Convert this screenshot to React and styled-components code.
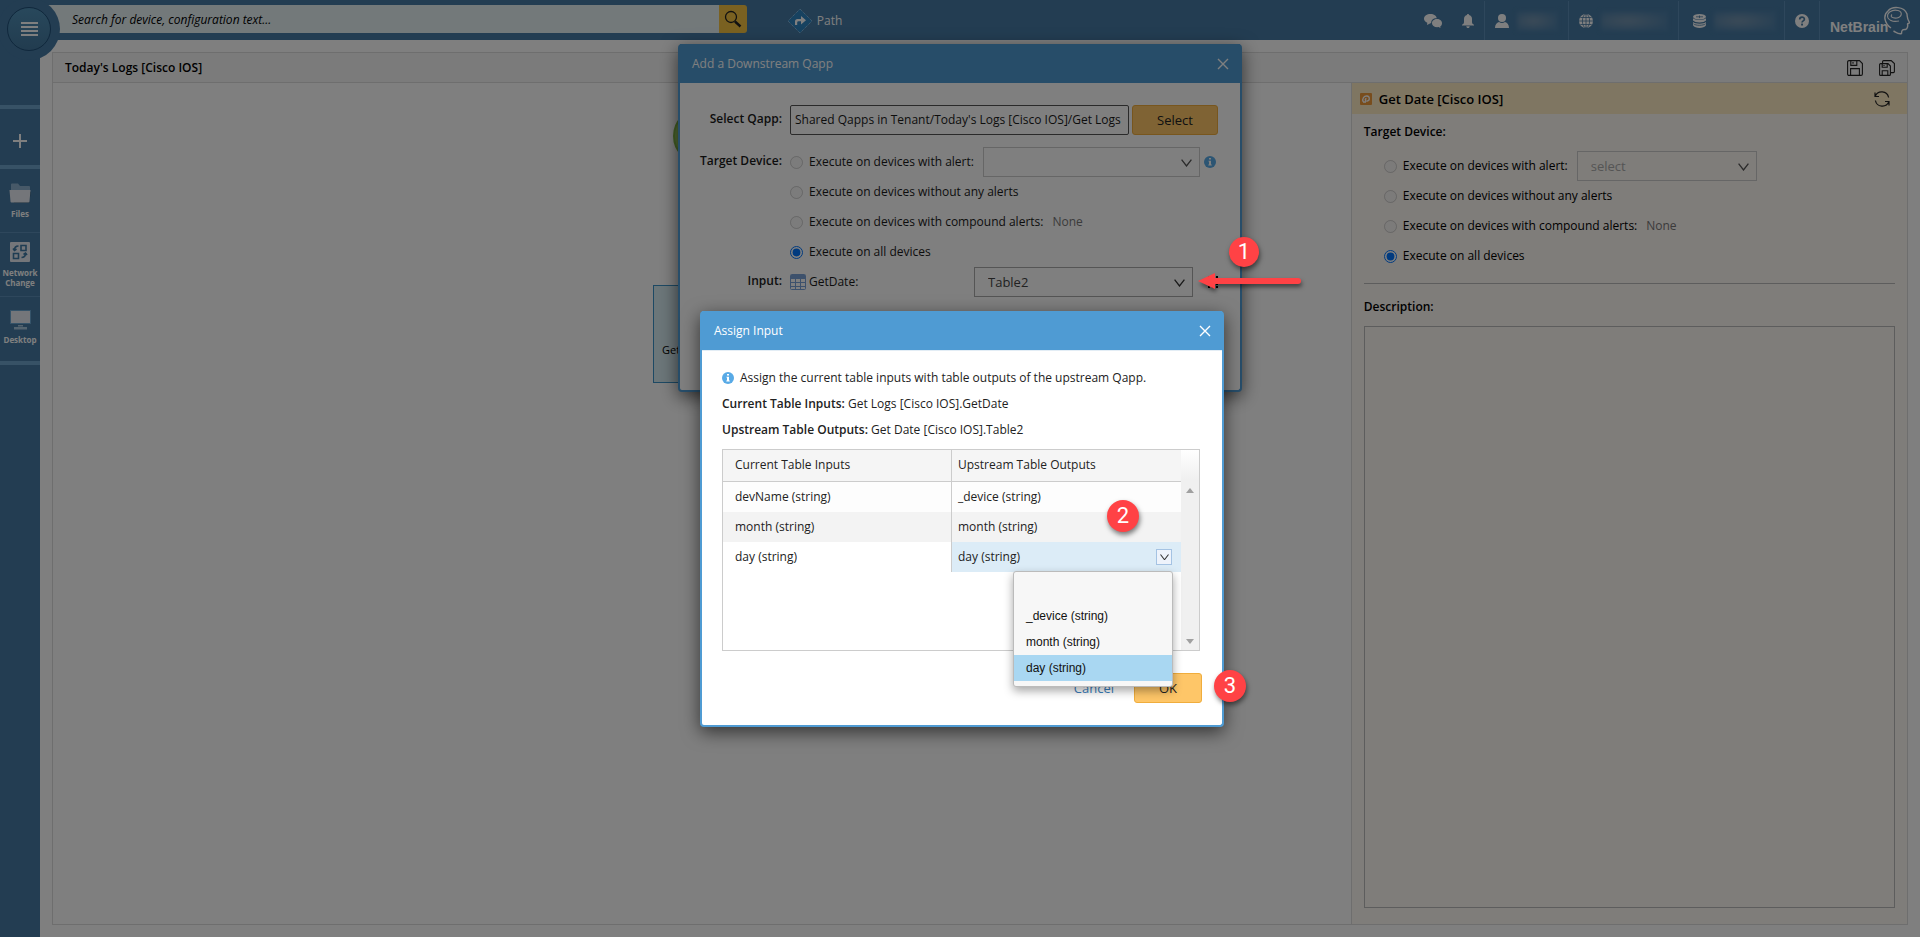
import React, { useState } from 'react';
import styled, { createGlobalStyle, css } from 'styled-components';

const blue = '#4f9bd3';
const navy = '#467aa4';

const GlobalStyle = createGlobalStyle`
  *, *::before, *::after { box-sizing: border-box; }
  body { margin: 0; background: #fff; color: #000; font: 12px/16px "Open Sans", sans-serif; overflow: hidden; }
  button, input, select, textarea { font: inherit; color: inherit; margin: 0; }
  button { padding: 0; border: 0; background: none; cursor: pointer; }
  svg { display: block; flex: none; }
  p, h1, h2, ul { margin: 0; padding: 0; font-size: inherit; }
`;

const Page = styled.div`
  min-height: 100vh;
  display: flex;
  flex-direction: column;
  position: relative;
`;

const TopBar = styled.header`
  height: 40px;
  flex: none;
  background: ${navy};
  color: #fff;
  display: flex;
  align-items: center;
  padding: 1px 10px 0 40px;
`;

const SearchForm = styled.form`
  display: flex;
  width: 37.8%;
  height: 28px;
  margin-bottom: 3px;
`;

const SearchInput = styled.input`
  flex: 1;
  min-width: 0;
  border: 0;
  padding: 2px 0 0 32px;
  background: #e6f2f5;
  font-size: 12px;
  font-style: italic;
  &::placeholder { color: #000; opacity: 1; }
`;

const SearchButton = styled.button`
  width: 28px;
  background: #f5c342;
  border-radius: 0 3px 3px 0;
  color: #222;
  display: grid;
  place-items: center;
`;

const PathLink = styled.a`
  display: flex;
  align-items: center;
  gap: 4px;
  margin-left: 40px;
  color: #fff;
  text-decoration: none;
`;

const TopTools = styled.div`
  margin-left: auto;
  display: flex;
  height: 100%;
`;

const Tool = styled.button`
  height: 100%;
  display: flex;
  align-items: center;
  gap: 8px;
  color: #fff;
  padding: ${(p) => p.$pad || '0 10px'};
  border-left: ${(p) => (p.$divided ? '1px solid #5c8fb8' : '0')};
`;

const Redacted = styled.span`
  width: ${(p) => p.$width}px;
  height: 20px;
  background: radial-gradient(ellipse at 40% 50%, #7896b0, #4f80a8 75%);
  filter: blur(2px);
`;

const Logo = styled.span`
  display: flex;
  align-items: center;
  padding-left: 10px;
  border-left: 1px solid #5c8fb8;
`;

const MenuButton = styled.button`
  position: absolute;
  top: -2px;
  left: -2px;
  width: 62px;
  height: 62px;
  border-radius: 50%;
  background: ${navy};
  display: grid;
  place-items: center;
`;

const MenuDisc = styled.span`
  width: 44px;
  height: 44px;
  border-radius: 50%;
  border: 1px solid #1f4f78;
  background: linear-gradient(#5191b8, #44789f);
  display: flex;
  flex-direction: column;
  align-items: center;
  justify-content: center;
  gap: 2px;
  i { width: 17px; height: 2px; background: #fff; }
`;

const Columns = styled.div`
  flex: 1;
  display: flex;
`;

const SideBar = styled.nav`
  width: 40px;
  flex: none;
  background: ${navy};
  padding-top: 65px;
  display: flex;
  flex-direction: column;
`;

const SideItem = styled.button`
  color: #fff;
  font-size: 8px;
  line-height: 10px;
  font-weight: 700;
  display: flex;
  flex-direction: column;
  align-items: center;
  justify-content: center;
  gap: ${(p) => (p.$last ? 5 : 6)}px;
  padding: ${(p) => p.$pad || 0};
  border-top: ${(p) => (p.$thick ? '4px' : '1px')} solid ${(p) => (p.$thick ? '#6ea5cd' : '#5c8fb8')};
  border-bottom: ${(p) => (p.$last ? '4px solid #6ea5cd' : '0')};
  height: ${(p) => p.$height}px;
`;

const Workspace = styled.main`
  flex: 1;
  margin: 12px;
  border: 1px solid #ddd;
  display: flex;
  flex-direction: column;
`;

const WorkspaceHead = styled.div`
  height: 30px;
  border-bottom: 1px solid #ddd;
  background: #f7f7f7;
  padding: 0 12px;
  display: flex;
  align-items: center;
  gap: 16px;
  h1 { font-weight: 600; flex: 1; }
`;

const WorkspaceBody = styled.div`
  flex: 1;
  display: flex;
`;

const Canvas = styled.div`
  flex: 1;
  position: relative;
`;

const StartNode = styled.div`
  position: absolute;
  left: 620px;
  top: 25px;
  width: 56px;
  height: 56px;
  border-radius: 50%;
  background: #a0d468;
  border: 2px solid #86bd4a;
`;

const QappNode = styled.div`
  position: absolute;
  left: 600px;
  top: 202px;
  width: 120px;
  height: 98px;
  background: #d8edf3;
  border: 1px solid #3b93c8;
  padding: 56px 8px 0;
  font-size: 11px;
`;

const DetailPanel = styled.aside`
  width: 30%;
  flex: none;
  border-left: 1px solid #ddd;
  background: #fffaf5;
  display: flex;
  flex-direction: column;
`;

const DetailHead = styled.div`
  height: 31px;
  background: #ffecc4;
  padding: 0 17px 0 8px;
  display: flex;
  align-items: center;
  gap: 7px;
  h2 { font-size: 13px; font-weight: 600; flex: 1; }
`;

const DetailBody = styled.div`
  flex: 1;
  display: flex;
  flex-direction: column;
  padding: 10px 12px 16px 12px;
  hr { width: 100%; border: 0; border-top: 1px solid #bbb; margin: 12px 0 15px; }
`;

const Heading = styled.span`
  font-weight: 600;
  line-height: 16px;
`;

const RadioList = styled.div`
  display: flex;
  flex-direction: column;
  padding-left: ${(p) => p.$indent || 0}px;
  margin-top: ${(p) => p.$top || 0}px;
`;

const RadioRow = styled.div`
  height: 30px;
  display: flex;
  align-items: center;
  white-space: nowrap;
  label { display: flex; align-items: center; gap: 6px; }
  input { width: 13px; height: 13px; }
`;

const Muted = styled.span`
  color: #777;
  margin-left: 9px;
`;

const SelectBox = styled.span`
  position: relative;
  display: block;
  height: 30px;
  width: ${(p) => p.$width}px;
  margin-left: ${(p) => p.$gap || 0}px;
  color: ${(p) => (p.$faint ? '#555' : '#333')};
  svg { position: absolute; right: 8px; top: 12px; pointer-events: none; }
  select {
    appearance: none;
    width: 100%;
    height: 100%;
    padding: 0 26px 0 13px;
    border: 1px solid ${(p) => (p.$faint ? '#ccc' : '#aaa')};
    border-radius: 0;
    background: transparent;
    color: ${(p) => (p.$faint ? '#aaa' : '#444')};
    font-size: 13px;
    opacity: 1;
  }
`;

const Description = styled.textarea`
  flex: 1;
  width: 100%;
  resize: none;
  margin-top: 11px;
  border: 1px solid #bbb;
  background: transparent;
`;

const Layer = styled.div`
  position: absolute;
  inset: 0;
  display: flex;
  justify-content: center;
  align-items: flex-start;
  padding: ${(p) => p.$padding};
  background: ${(p) => (p.$dim ? 'rgba(0, 0, 0, 0.5)' : 'transparent')};
`;

const Dialog = styled.section`
  position: relative;
  width: ${(p) => p.$width}px;
  min-height: ${(p) => p.$height}px;
  border: 2px solid ${blue};
  border-top: 0;
  border-radius: 4px;
  background: #fff;
  box-shadow: 0 5px 18px rgba(0, 0, 0, 0.6);
`;

const DialogHead = styled.div`
  height: 39px;
  padding: 1px 11px 0 12px;
  background: ${blue};
  color: #fff;
  display: flex;
  align-items: center;
  justify-content: space-between;
  h2 { font-weight: 500; font-size: 12px; }
`;

const Form = styled.div`
  display: grid;
  grid-template-columns: 102px 1fr;
  column-gap: 8px;
  padding: 22px 22px 0 0;
  color: #1a1a1a;
`;

const FormLabel = styled.label`
  font-weight: 600;
  line-height: 28px;
  text-align: right;
`;

const PickRow = styled.div`
  display: flex;
  gap: 3px;
  height: 30px;
  margin-bottom: 12px;
  input { flex: 1; min-width: 0; border: 1px solid #555; padding: 0 4px; background: #fff; border-radius: 2px; }
`;

const amber = css`
  background: #fec668;
  border: 1px solid #f0ad3c;
  border-radius: 3px;
  color: #222;
  height: 30px;
`;

const AmberButton = styled.button`
  ${amber}
  width: ${(p) => p.$width}px;
  font-size: 13px;
`;

const InputRow = styled.div`
  height: 30px;
  display: flex;
  align-items: center;
  gap: 3px;
  & > label { flex: 1; }
`;

const MoreButton = styled.button`
  width: 10px;
  height: 12px;
  margin-left: 12px;
  border: 2px dotted #000;
`;

const AssignBody = styled.div`
  border-top: 1px solid #e3edf5;
  padding: 19px 22px 22px 20px;
  color: #222;
`;

const Hint = styled.p`
  display: flex;
  align-items: center;
  gap: 6px;
  margin-bottom: 10px;
`;

const Line = styled.p`
  margin-bottom: 10px;
  b { font-weight: 600; }
`;

const GridFrame = styled.div`
  height: 202px;
  margin-top: 11px;
  border: 1px solid #ccc;
  display: flex;
  align-items: stretch;
`;

const TableArea = styled.div`
  flex: 1;
`;

const InputsTable = styled.table`
  width: 100%;
  border-collapse: separate;
  border-spacing: 0;
  table-layout: fixed;
  th, td { height: 30px; padding: 0 6px; text-align: left; font-weight: 400; }
  th { height: 32px; padding-bottom: 2px; background: #f5f5f5; border-bottom: 1px solid #ccc; }
  th:first-child, td:first-child { padding-left: 12px; border-right: 1px solid #ccc; }
  tbody tr:first-child { background: #fdfdfd; }
  tbody tr:nth-child(2) { background: #f3f3f3; }
`;

const ActiveCell = styled.td`
  background: #dcecf7;
  & > div { display: flex; align-items: center; justify-content: space-between; padding-right: 3px; }
`;

const CellToggle = styled.button`
  width: 16px;
  height: 16px;
  border: 1px solid #a5c3e3;
  background: #eef3fb;
  display: grid;
  place-items: center;
`;

const ScrollTrack = styled.div`
  width: 18px;
  background: linear-gradient(#fff, #f0f0f0 30px);
  display: flex;
  flex-direction: column;
  align-items: center;
  justify-content: space-between;
  padding: 38px 0 6px;
`;

const Options = styled.ul`
  position: absolute;
  left: 311px;
  top: 260px;
  width: 160px;
  padding: 5px 0;
  list-style: none;
  border: 1px solid #bbb;
  border-radius: 3px;
  background: #f7f7f7;
  box-shadow: 0 4px 10px rgba(0, 0, 0, 0.35);
  font-family: "Liberation Sans", Arial, sans-serif;
`;

const Option = styled.li`
  height: 26px;
  line-height: 26px;
  padding-left: 12px;
  color: #111;
  background: ${(p) => (p.$active ? '#a9d7f2' : 'transparent')};
`;

const Actions = styled.div`
  display: flex;
  justify-content: flex-end;
  align-items: center;
  gap: 20px;
  margin: 22px -2px 0 0;
`;

const CancelButton = styled.button`
  color: #3a80bd;
  font-size: 13px;
`;

const Badge = styled.span`
  position: absolute;
  left: ${(p) => p.$x}px;
  top: ${(p) => p.$y}px;
  width: ${(p) => p.$size}px;
  height: ${(p) => p.$size}px;
  border-radius: 50%;
  background: #ff4245;
  color: #fff;
  font-family: Roboto, sans-serif;
  font-size: 22px;
  line-height: ${(p) => p.$size}px;
  text-align: center;
  box-shadow: 1px 3px 5px rgba(0, 0, 0, 0.5);
`;

const Arrow = styled.svg`
  position: absolute;
  left: 496px;
  top: -42px;
  filter: drop-shadow(1px 3px 2px rgba(0, 0, 0, 0.5));
`;

const Chevron = ({ size = 11, color = 'currentColor' }) => (
  <svg width={size} height={(size * 8) / 11} viewBox="0 0 11 8" fill="none" stroke={color} strokeWidth="1.3">
    <path d="M.6.6l4.900 6.400L10.400.6" />
  </svg>
);

const CloseIcon = () => (
  <svg width="12" height="12" viewBox="0 0 12 12" stroke="#fff" strokeWidth="1.4">
    <path d="M1 1l10 10M11 1L1 11" />
  </svg>
);

const InfoIcon = () => (
  <svg width="12" height="12" viewBox="0 0 12 12">
    <circle cx="6" cy="6" r="6" fill="#58aae6" />
    <path d="M5 2h2v1.6H5zM4.4 4.7H7v3.9h.8v1H4.3v-1H5V5.6h-.6z" fill="#fff" />
  </svg>
);

const Caret = ({ down }) => (
  <svg width="8" height="5" viewBox="0 0 8 5" fill="#a0a0a0">
    <path d={down ? 'M0 0h8L4 5z' : 'M0 5h8L4 0z'} />
  </svg>
);

const TableIcon = () => (
  <svg width="16" height="16" viewBox="0 0 16 16">
    <rect x=".5" y=".5" width="15" height="15" rx="1" fill="#fff" stroke="#7ba3d8" />
    <path d="M1 1h14v3H1z" fill="#7ba3d8" />
    <path d="M1 4.5h14M1 8.500h14M1 12.500h14M5.500 4v11M10.500 4v11" stroke="#7ba3d8" />
  </svg>
);

const SaveIcon = () => (
  <svg width="16" height="16" viewBox="0 0 16 16" fill="none" stroke="#222" strokeWidth="1.1">
    <path d="M2 .6h10.5L15.4 3.5V14a1.4 1.4 0 0 1-1.4 1.4H2A1.4 1.4 0 0 1 .6 14V2A1.4 1.4 0 0 1 2 .6z" />
    <path d="M3.8.6v4.8h6V.6M3.6 15.4V8.6h8.8v6.8M6 2v1.8" />
  </svg>
);

const SaveAllIcon = () => (
  <svg width="16" height="16" viewBox="0 0 16 16" fill="none" stroke="#222" strokeWidth="1.1">
    <path d="M1.6 3.6h7.4l2.4 2.4v8.4a1 1 0 0 1-1 1H1.6a1 1 0 0 1-1-1V4.6a1 1 0 0 1 1-1z" />
    <path d="M3.2 3.6v3.6h5V3.6M3.2 15.4v-4.6h5.6v4.6M5 5v1M3.6 3V1.6a1 1 0 0 1 1-1h7.6l3.2 3v8a1 1 0 0 1-1 1h-2.6" />
  </svg>
);

const RefreshIcon = () => (
  <svg width="16" height="16" viewBox="0 0 16 16" fill="none" stroke="#222" strokeWidth="1.2">
    <path d="M1 1.5v4h4M1.2 5.4A7 7 0 0 1 14.6 6.5M15 14.5v-4h-4M14.8 10.6A7 7 0 0 1 1.4 9.5" />
  </svg>
);

const QappIcon = () => (
  <svg width="12" height="12" viewBox="0 0 12 12">
    <rect width="12" height="12" rx="1" fill="#f09a3a" />
    <path d="M3.200 8.800C1.800 5.500 4 2.800 7 3c3 .3 3 4.500.3 5C5 8.300 4.500 6 6.500 5.500M3 9h3" fill="none" stroke="#fff" strokeWidth="1.300" />
  </svg>
);

const PathIcon = () => (
  <svg width="26" height="26" viewBox="0 0 26 26">
    <path d="M13 1l12 12-12 12L1 13z" fill="#2e84c0" stroke="#9ccbee" strokeDasharray="1 1" />
    <path d="M8 17v-3.500q0-2.500 2.500-2.500H14V8l5 4.300-5 4.200v-3.200h-2.500q-1.300 0-1.300 1.300V17z" fill="#fff" />
  </svg>
);

const SearchIcon = () => (
  <svg width="18" height="18" viewBox="0 0 18 18" fill="none" stroke="currentColor">
    <circle cx="7" cy="7" r="5.500" strokeWidth="1.300" />
    <path d="M11 11.500l5.500 5" strokeWidth="2.400" />
  </svg>
);

const ChatIcon = () => (
  <svg width="18" height="14" viewBox="0 0 18 14" fill="#fff">
    <path d="M6.500 0C10 0 12.500 1.800 12.700 4.200 9.500 4 7 6 7.200 9L6 9.400 3 11l.3-2.300C1.300 7.800 0 6.500 0 4.800 0 2 3 0 6.500 0z" />
    <path d="M13 5c2.800 0 5 1.800 5 4.200 0 1.500-.7 2.500-1.800 3.300l.3 1.500-2-.9C10.500 13.500 8 11.700 8 9.200 8 6.800 10.200 5 13 5z" />
  </svg>
);

const BellIcon = () => (
  <svg width="12" height="14" viewBox="0 0 12 14" fill="#fff">
    <path d="M6 0c.7 0 1 .4 1 1 2 .5 3 2 3 4v3c0 1.500.8 2.200 2 2.800v.7H0v-.7C1.200 10.200 2 9.500 2 8V5c0-2 1-3.500 3-4 0-.6.3-1 1-1zM4.300 12.200h3.400c0 1-.7 1.800-1.700 1.800s-1.700-.8-1.700-1.800z" />
  </svg>
);

const UserIcon = () => (
  <svg width="14" height="14" viewBox="0 0 14 14" fill="#fff">
    <circle cx="7" cy="4" r="4" />
    <path d="M0 14c0-3.500 1.700-5.500 4-6 1.800 1.300 4.200 1.300 6 0 2.300.5 4 2.500 4 6z" />
  </svg>
);

const GlobeIcon = () => (
  <svg width="14" height="14" viewBox="0 0 14 14">
    <circle cx="7" cy="7" r="7" fill="#fff" />
    <path d="M7 0v14M0 7h14M1.300 3.500h11.400M1.300 10.500h11.400" stroke={navy} strokeWidth=".8" />
    <ellipse cx="7" cy="7" rx="3.600" ry="7" fill="none" stroke={navy} strokeWidth=".8" />
  </svg>
);

const DatabaseIcon = () => (
  <svg width="13" height="14" viewBox="0 0 13 14" fill="#fff">
    <ellipse cx="6.500" cy="2.800" rx="6.500" ry="2.800" />
    <path d="M0 4.300c2 2.300 11 2.300 13 0v2.200c-2 2.500-11 2.500-13 0zM0 8c2 2.300 11 2.300 13 0v3.200c-2 3.700-11 3.700-13 0z" />
    <path d="M3 2.800h7M6.500 1.500v2.600M.5 9.800c2 2 10 2 12 0" stroke={navy} strokeWidth=".8" fill="none" />
  </svg>
);

const HelpIcon = () => (
  <svg width="14" height="14" viewBox="0 0 14 14">
    <circle cx="7" cy="7" r="7" fill="#fff" />
    <path d="M4.700 5.400C4.700 2.300 9.400 2.400 9.400 5.200 9.400 7 7 6.800 7 8.600" fill="none" stroke={navy} strokeWidth="1.700" />
    <rect x="6.100" y="9.600" width="1.900" height="1.900" fill={navy} />
  </svg>
);

const BrandLogo = () => (
  <svg width="80" height="30" viewBox="0 0 80 30">
    <text x="0" y="26" fill="#fff" fontFamily="Liberation Sans, sans-serif" fontSize="14" fontWeight="700">NetBrain</text>
    <path d="M61 22c-7-5-8-13-3-17C62 0 74 0 77 8c.5 3-.5 4 2.500 8.500 0 1-2 1-2 1.500.5 2 0 5-2 5.500-2 0-4-.5-4 4-3 1-5-1-8-2.500" fill="none" stroke="#fff" strokeWidth="1.400" />
    <path d="M58 12c-2-5 4-9 10-7.500 5 1.500 4 6.500-1 7.500-5 .5-7-1.500-5-3.500M58 12c2 3 6 4 11 3" fill="none" stroke="#fff" strokeWidth="1.100" />
  </svg>
);

const PlusIcon = () => (
  <svg width="14" height="14" viewBox="0 0 14 14" stroke="#fff" strokeWidth="2">
    <path d="M7 0v14M0 7h14" />
  </svg>
);

const FolderIcon = () => (
  <svg width="23" height="20" viewBox="0 0 23 20">
    <path d="M4 9h18l-2 11H5z" fill="#315675" />
    <path d="M2 1.500Q2 .5 3 .5h6l2 2.500h9q1 0 1 1v5H2z" fill="#8fb3d0" />
    <path d="M.5 7h21l-1 11.500q-.2 1-1 1h-17q-1 0-1-1z" fill="#e9edf5" />
  </svg>
);

const ChangeIcon = () => (
  <svg width="20" height="20" viewBox="0 0 20 20">
    <rect width="20" height="20" rx="1" fill="#e9edf5" />
    <g fill="none" stroke="#3f7aa6" strokeWidth="1.600">
      <path d="M11 3.500h5v5h-5zM3.500 11.500h5v5h-5zM4.500 8.500c0-3 1-4.500 4-4.500M15.500 11c0 3-1 4.500-4 4.500" />
      <path d="M3 6.500l1.500 2 2-1.500M17 13l-1.500-2-2 1.500" />
    </g>
  </svg>
);

const DesktopIcon = () => (
  <svg width="21" height="20" viewBox="0 0 21 20">
    <rect x=".5" y=".5" width="20" height="13" fill="#e9edf5" stroke="#6ba6d2" />
    <path d="M8 15h5v1.500H8zM4 17h13v2.500H4z" fill="#a9c8df" />
  </svg>
);

const ALERT_CHOICES = [
  'Execute on devices with alert:',
  'Execute on devices without any alerts',
  'Execute on devices with compound alerts:',
  'Execute on all devices',
];

function TargetOptions({ name, indent, top, selectWidth, selectGap, placeholder, info }) {
  return (
    <RadioList $indent={indent} $top={top} role="radiogroup" aria-label="Target Device">
      {ALERT_CHOICES.map((text, i) => (
        <RadioRow key={text}>
          <label>
            <input type="radio" name={name} disabled={i < 3} defaultChecked={i === 3} />
            {text}
          </label>
          {i === 0 && (
            <SelectBox $width={selectWidth} $gap={selectGap} $faint>
              <select disabled aria-label="Alert">
                <option>{placeholder}</option>
              </select>
              <Chevron />
            </SelectBox>
          )}
          {i === 0 && info}
          {i === 2 && <Muted>None</Muted>}
        </RadioRow>
      ))}
    </RadioList>
  );
}

const InfoSlot = styled.span`
  margin-left: 4px;
`;

const OPTIONS = ['', '_device (string)', 'month (string)', 'day (string)'];

export default function App() {
  const [picked, setPicked] = useState('day (string)');
  return (
    <Page>
      <GlobalStyle />
      <TopBar>
        <SearchForm>
          <SearchInput aria-label="Search" placeholder="Search for device, configuration text..." />
          <SearchButton type="button" aria-label="Search"><SearchIcon /></SearchButton>
        </SearchForm>
        <PathLink href="#path"><PathIcon />Path</PathLink>
        <TopTools>
          <Tool aria-label="Chat"><ChatIcon /></Tool>
          <Tool aria-label="Alerts"><BellIcon /></Tool>
          <Tool $divided aria-label="User"><UserIcon /><Redacted $width={41} /></Tool>
          <Tool $divided aria-label="Domain"><GlobeIcon /><Redacted $width={67} /></Tool>
          <Tool $divided $pad="0 8px 0 14px" aria-label="Data source"><DatabaseIcon /><Redacted $width={62} /></Tool>
          <Tool $divided aria-label="Help"><HelpIcon /></Tool>
          <Logo><BrandLogo /></Logo>
        </TopTools>
      </TopBar>

      <Columns>
        <SideBar>
          <SideItem $thick $height={60} $pad="8px 0 0" aria-label="New"><PlusIcon /></SideItem>
          <SideItem $thick $height={67}><FolderIcon />Files</SideItem>
          <SideItem $height={64}><ChangeIcon /><span>Network<br />Change</span></SideItem>
          <SideItem $height={69} $pad="0 0 3px" $last><DesktopIcon />Desktop</SideItem>
        </SideBar>
        <Workspace>
          <WorkspaceHead>
            <h1>Today's Logs [Cisco IOS]</h1>
            <button aria-label="Save"><SaveIcon /></button>
            <button aria-label="Save as"><SaveAllIcon /></button>
          </WorkspaceHead>
          <WorkspaceBody>
            <Canvas>
              <StartNode />
              <QappNode>Get Date</QappNode>
            </Canvas>
            <DetailPanel>
              <DetailHead>
                <QappIcon />
                <h2>Get Date [Cisco IOS]</h2>
                <button aria-label="Refresh"><RefreshIcon /></button>
              </DetailHead>
              <DetailBody>
                <Heading>Target Device:</Heading>
                <TargetOptions name="panel-target" indent={20} top={11} selectWidth={180} selectGap={9} placeholder="select" />
                <hr />
                <Heading as="label" htmlFor="description">Description:</Heading>
                <Description id="description" />
              </DetailBody>
            </DetailPanel>
          </WorkspaceBody>
        </Workspace>
      </Columns>

      <MenuButton aria-label="Menu"><MenuDisc><i /><i /><i /><i /></MenuDisc></MenuButton>

      <Layer $padding="44px 0 0">
        <Dialog $width={564} $height={348}>
          <DialogHead>
            <h2>Add a Downstream Qapp</h2>
            <button aria-label="Close"><CloseIcon /></button>
          </DialogHead>
          <Form>
            <FormLabel htmlFor="qapp">Select Qapp:</FormLabel>
            <PickRow>
              <input id="qapp" readOnly value="Shared Qapps in Tenant/Today's Logs [Cisco IOS]/Get Logs" />
              <AmberButton $width={86}>Select</AmberButton>
            </PickRow>
            <FormLabel as="span">Target Device:</FormLabel>
            <TargetOptions name="dialog-target" selectWidth={217} selectGap={9} placeholder="" info={<InfoSlot><InfoIcon /></InfoSlot>} />
            <FormLabel htmlFor="input-table">Input:</FormLabel>
            <InputRow>
              <TableIcon />
              <label htmlFor="input-table">GetDate:</label>
              <SelectBox $width={219}>
                <select id="input-table"><option>Table2</option></select>
                <Chevron />
              </SelectBox>
              <MoreButton aria-label="More" />
            </InputRow>
          </Form>
        </Dialog>
      </Layer>

      <Layer $dim $padding="311px 0 0 4px">
        <Dialog $width={524}>
          <DialogHead>
            <h2>Assign Input</h2>
            <button aria-label="Close"><CloseIcon /></button>
          </DialogHead>
          <AssignBody>
            <Hint><InfoIcon />Assign the current table inputs with table outputs of the upstream Qapp.</Hint>
            <Line><b>Current Table Inputs:</b> Get Logs [Cisco IOS].GetDate</Line>
            <Line><b>Upstream Table Outputs:</b> Get Date [Cisco IOS].Table2</Line>
            <GridFrame>
              <TableArea>
                <InputsTable>
                  <thead>
                    <tr><th>Current Table Inputs</th><th>Upstream Table Outputs</th></tr>
                  </thead>
                  <tbody>
                    <tr><td>devName (string)</td><td>_device (string)</td></tr>
                    <tr><td>month (string)</td><td>month (string)</td></tr>
                    <tr>
                      <td>day (string)</td>
                      <ActiveCell>
                        <div>
                          {picked}
                          <CellToggle aria-label="Choose output"><Chevron size={9} color="#333" /></CellToggle>
                        </div>
                      </ActiveCell>
                    </tr>
                  </tbody>
                </InputsTable>
              </TableArea>
              <ScrollTrack><Caret /><Caret down /></ScrollTrack>
            </GridFrame>
            <Actions>
              <CancelButton>Cancel</CancelButton>
              <AmberButton $width={68}>OK</AmberButton>
            </Actions>
          </AssignBody>
          <Options role="listbox" aria-label="Upstream table output">
            {OPTIONS.map((o) => (
              <Option key={o} role="option" aria-selected={o === picked} $active={o === picked} onClick={() => setPicked(o)}>
                {o}
              </Option>
            ))}
          </Options>
          <Arrow width="106" height="26" viewBox="0 0 106 26">
            <path d="M0 12L17 4v5h83a3 3 0 0 1 0 6H17v5z" fill="#ff4245" />
          </Arrow>
          <Badge $size={30} $x={527} $y={-74}>1</Badge>
          <Badge $size={32} $x={405} $y={189}>2</Badge>
          <Badge $size={32} $x={512} $y={359}>3</Badge>
        </Dialog>
      </Layer>
    </Page>
  );
}
